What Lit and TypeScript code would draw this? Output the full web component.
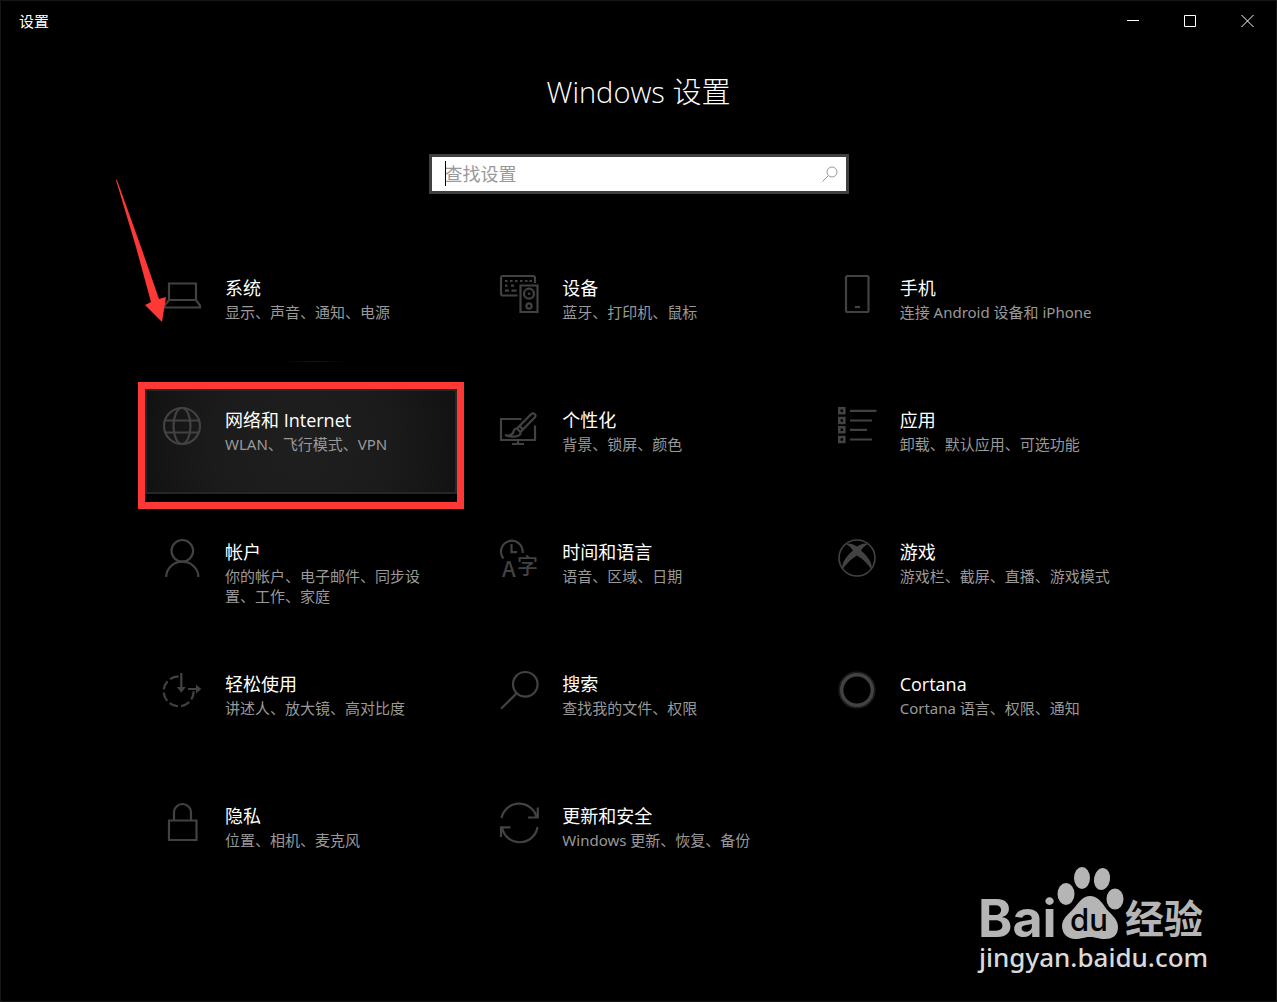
import { LitElement, html, svg, css, nothing, type TemplateResult } from "lit";
import { customElement, property } from "lit/decorators.js";

const icons: Record<string, TemplateResult> = {
  system: svg`<path d="M6 8.500h27v16.500h-27zM6 25L1.500 30.500v2h35.500v-2L33 25"/>`,
  devices: svg`<path d="M17.5 20.5H3a2 2 0 0 1-2-2V3a2 2 0 0 1 2-2h30a2 2 0 0 1 2 2v5"/>
    <path d="M5 6h2.5M10 6h2.5M15 6h2.5M20 6h2.5M25 6h2.5M29.500 6h2.500M5 10.700h2.500M11 10.700h3M5 15.700h4M11.500 15.700h5"/>
    <path d="M20.500 10.500h17v26.500h-17z"/><circle cx="29" cy="18.700" r="5"/>
    <circle cx="29" cy="31" r="2.600"/><circle class="solid" cx="29" cy="18.700" r="1.300"/>`,
  phone: svg`<rect x="8" y="1" width="22.500" height="36" rx="1.500"/><path d="M17 32h5"/>`,
  network: svg`<circle cx="19" cy="19" r="18"/><ellipse cx="19" cy="19" rx="8.500" ry="18"/>
    <path d="M2 13.500h34M2 25.500h34"/>`,
  personal: svg`<path d="M21.500 12H1v21h34V18.500M18 33v4M12 37h12"/>
    <path d="M19.500 19L31 7.300q2-1.800 3.700-.3t0 3.500L23 22.500zM19.500 19q-1.500 1.500-2.500 2.500l3.500 3.500 2.500-2.500M17 21.500q-3 0-3.500 3T9 28.500q-2 .5-4-.5h0q5 2 10.500 1.500 5.500-.7 5-4.500"/>`,
  apps: svg`<path d="M1.300 1.300h5v5h-5zM1.300 11h5v5h-5zM1.300 20.300h5v5h-5zM1.300 30h5v5h-5z" stroke-width="2.600"/>
    <path d="M12 3.800h26.500M12 13.500h22M12 22.800h17M12 32.500h22"/>`,
  account: svg`<circle cx="19.300" cy="11.800" r="10.800"/><path d="M3.200 38a16.100 15.300 0 0 1 32.200 0"/>`,
  time: svg`<path d="M3.500 19.500A10.800 10.800 0 1 1 22.500 14M11.500 5v8.200h5.500"/>
    <text class="glyph" x="2" y="38" font-size="22">A</text>
    <text class="glyph" x="17" y="33.500" font-size="21">字</text>`,
  gaming: svg`<circle cx="19" cy="19" r="18" stroke-width="1.600"/>
    <path class="solid" d="M8 5.200q4-2.200 11 2.300 7-4.500 11-2.300-4 1.500-7 6.300c6 5 12.500 13 10.500 19.500C31 26 25 20 19 16.500 13 20 7 26 4.500 31c-2-6.500 4.500-14.500 10.500-19.500-3-4.800-7-6.300-7-6.300z"/>`,
  ease: svg`<path d="M15.500 5.300a15 15 0 1 0 15.200 15" stroke-dasharray="9 3.300"/>
    <path d="M18.300 2v16M25 18h9"/><path class="solid" d="M13.800 16h9l-4.500 5.700zM33 13.600v9l5.300-4.500z"/>`,
  search: svg`<circle cx="25.300" cy="13.300" r="12.300"/><path d="M16.700 22.300L1 37.800"/>`,
  cortana: svg`<circle class="halo" cx="19" cy="19" r="17.500"/><circle cx="19" cy="19" r="15.300" stroke-width="3.400"/>`,
  privacy: svg`<path d="M6 17.500h27.500v19.500h-27.500zM11 17V9.500a8.500 8.500 0 0 1 17 0V17"/>`,
  update: svg`<path d="M1.500 15A18 18 0 0 1 36.500 14M37.800 4.500V14.500H28M37.500 24A18 18 0 0 1 2 24.500M1 34V24.300H10.500"/>`,
};

interface Category {
  icon: string;
  title: string;
  detail: string;
  state?: "near" | "hovered";
}

const categories: Category[] = [
  { icon: "system", title: "系统", detail: "显示、声音、通知、电源", state: "near" },
  { icon: "devices", title: "设备", detail: "蓝牙、打印机、鼠标" },
  { icon: "phone", title: "手机", detail: "连接 Android 设备和 iPhone" },
  { icon: "network", title: "网络和 Internet", detail: "WLAN、飞行模式、VPN", state: "hovered" },
  { icon: "personal", title: "个性化", detail: "背景、锁屏、颜色" },
  { icon: "apps", title: "应用", detail: "卸载、默认应用、可选功能" },
  { icon: "account", title: "帐户", detail: "你的帐户、电子邮件、同步设置、工作、家庭" },
  { icon: "time", title: "时间和语言", detail: "语音、区域、日期" },
  { icon: "gaming", title: "游戏", detail: "游戏栏、截屏、直播、游戏模式" },
  { icon: "ease", title: "轻松使用", detail: "讲述人、放大镜、高对比度" },
  { icon: "search", title: "搜索", detail: "查找我的文件、权限" },
  { icon: "cortana", title: "Cortana", detail: "Cortana 语言、权限、通知" },
  { icon: "privacy", title: "隐私", detail: "位置、相机、麦克风" },
  { icon: "update", title: "更新和安全", detail: "Windows 更新、恢复、备份" },
];

@customElement("settings-tile")
export class SettingsTile extends LitElement {
  @property({ attribute: false }) category!: Category;

  static styles = css`
    :host {
      display: block;
    }
    .tile {
      position: relative;
      box-sizing: border-box;
      display: flex;
      gap: 24px;
      min-height: 105px;
      height: 100%;
      padding: 18px 15px 0 18px;
      color: #fff;
      text-decoration: none;
    }
    .near {
      background: linear-gradient(90deg, transparent 44%, #161616 54%, transparent 65%) bottom / 100% 1px no-repeat;
    }
    .hovered {
      background: radial-gradient(circle at 50% 55%, #1f1f1f 0, #1b1b1b 90px, #101010 175px);
      box-shadow: inset 0 0 0 2px #262626;
    }
    .icon {
      flex: none;
      width: 38px;
      height: 38px;
      overflow: visible;
      fill: none;
      stroke: #424242;
      stroke-width: 2.2;
    }
    .solid {
      fill: #424242;
      stroke: none;
    }
    .halo {
      stroke: #1c1c1c;
    }
    .glyph {
      fill: #424242;
      stroke: none;
      font-family: "Noto Sans CJK SC", sans-serif;
      font-weight: 500;
    }
    .copy {
      min-width: 0;
    }
    .title {
      margin: 0;
      font-size: 18px;
      font-weight: 400;
      line-height: 27px;
    }
    .detail {
      margin: 0;
      font-family: "Noto Sans", "Noto Sans CJK SC", sans-serif;
      font-size: 15px;
      line-height: 20px;
      color: #999;
    }
    .frame {
      position: absolute;
      inset: -7px -7px -15px -7px;
      border: 7px solid #fd3835;
      pointer-events: none;
    }
    .arrow {
      position: absolute;
      left: -29px;
      top: -77px;
      width: 50px;
      height: 143px;
      fill: #fd3835;
      pointer-events: none;
    }
  `;

  render() {
    const { icon, title, detail, state } = this.category;
    return html`<a class="tile ${state ?? ""}" href="#${icon}">
      <svg class="icon" viewBox="0 0 38 38" aria-hidden="true">${icons[icon]}</svg>
      <div class="copy">
        <h2 class="title">${title}</h2>
        <p class="detail">${detail}</p>
      </div>
      ${state === "near"
        ? html`<svg class="arrow" viewBox="0 0 50 143" aria-hidden="true">
            <path d="M0 0L1 0 25 67 43 119 50 117 46 142 29 125 35 122 20 67z" />
          </svg>`
        : nothing}
      ${state === "hovered" ? html`<span class="frame"></span>` : nothing}
    </a>`;
  }
}

@customElement("app-root")
export class AppRoot extends LitElement {
  static styles = css`
    :host {
      display: block;
      font-family: "Open Sans", "Noto Sans CJK SC", sans-serif;
    }
    .window {
      position: relative;
      box-sizing: border-box;
      min-height: 100vh;
      border: 1px solid #161616;
      background: #000;
      color: #fff;
    }
    .titlebar {
      display: flex;
      justify-content: space-between;
      align-items: center;
      height: 38px;
      padding-left: 18px;
      font-size: 15px;
    }
    .controls {
      display: flex;
    }
    .control {
      width: 57px;
      height: 38px;
      padding: 0;
      border: 0;
      background: none;
    }
    .glyph {
      display: block;
      margin: auto;
      width: 13px;
      height: 13px;
      fill: none;
      stroke: #fff;
    }
    .heading {
      margin: 32px 0 0;
      font-size: 29px;
      font-weight: 300;
      line-height: 42px;
      text-align: center;
    }
    .search {
      position: relative;
      box-sizing: border-box;
      display: flex;
      align-items: center;
      width: min(420px, 90%);
      height: 40px;
      margin: 41px auto 0;
      padding: 0 8px 0 13px;
      border: 3px solid #404040;
      background: #fff;
    }
    .field {
      flex: 1;
      min-width: 0;
      padding: 0;
      border: 0;
      outline: 0;
      background: none;
      color: #000;
      font: inherit;
      font-size: 18px;
      line-height: 26px;
    }
    .field::placeholder {
      color: #999;
      opacity: 1;
    }
    .caret {
      position: absolute;
      left: 13px;
      top: 4px;
      width: 1px;
      height: 25px;
      background: #000;
    }
    .lens {
      width: 16px;
      height: 16px;
      fill: none;
      stroke: #999;
    }
    .grid {
      display: grid;
      grid-template-columns: repeat(3, minmax(0, 1fr));
      gap: 27px 25px;
      max-width: 987px;
      margin: 63px auto 0;
      padding-bottom: 64px;
    }
    .watermark {
      position: absolute;
      right: 60px;
      bottom: 20px;
      width: 240px;
      height: 120px;
      fill: #b5b5b5;
    }
    .brand {
      font: 700 52px Inter, sans-serif;
    }
    .mark {
      font: 500 31px Inter, sans-serif;
      fill: #000;
    }
    .sub {
      font: 700 39px "Noto Sans CJK SC", sans-serif;
    }
    .site {
      font: 500 26px "Noto Sans", sans-serif;
      fill: #dadada;
    }
  `;

  render() {
    return html`<main class="window">
      <header class="titlebar">
        <span>设置</span>
        <div class="controls">
          <button class="control" aria-label="最小化">
            <svg class="glyph" viewBox="0 0 13 13"><path d="M0 6.500h12" /></svg>
          </button>
          <button class="control" aria-label="最大化">
            <svg class="glyph" viewBox="0 0 13 13"><path d="M.5 1.500h11v11H.5z" /></svg>
          </button>
          <button class="control" aria-label="关闭">
            <svg class="glyph" viewBox="0 0 13 13"><path d="M.5 1l12 12M12.500 1l-12 12" /></svg>
          </button>
        </div>
      </header>
      <h1 class="heading">Windows 设置</h1>
      <div class="search">
        <input class="field" type="text" placeholder="查找设置" aria-label="查找设置" />
        <span class="caret"></span>
        <svg class="lens" viewBox="0 0 16 16" aria-hidden="true">
          <circle cx="10" cy="6" r="5" /><path d="M6.500 9.500L.5 15.500" />
        </svg>
      </div>
      <nav class="grid">
        ${categories.map((c) => html`<settings-tile .category=${c}></settings-tile>`)}
      </nav>
      <svg class="watermark" viewBox="0 0 240 120">
        <text class="brand" x="2" y="76">Bai</text>
        <ellipse cx="90" cy="33" rx="8.500" ry="11" />
        <ellipse cx="106" cy="17" rx="8" ry="11" />
        <ellipse cx="126" cy="18" rx="8" ry="11" transform="rotate(10 126 18)" />
        <ellipse cx="139" cy="38" rx="8.500" ry="10.500" />
        <path d="M114 35c7 0 11 5 15 11s13 11 13 20-6 12-13 12-9-2-15-2-8 2-15 2-13-5-13-13 8-13 13-19 8-11 15-11z" />
        <text class="mark" x="94" y="70">du</text>
        <text class="sub" x="149" y="72">经验</text>
        <text class="site" x="3" y="106">jingyan.baidu.com</text>
      </svg>
    </main>`;
  }
}
